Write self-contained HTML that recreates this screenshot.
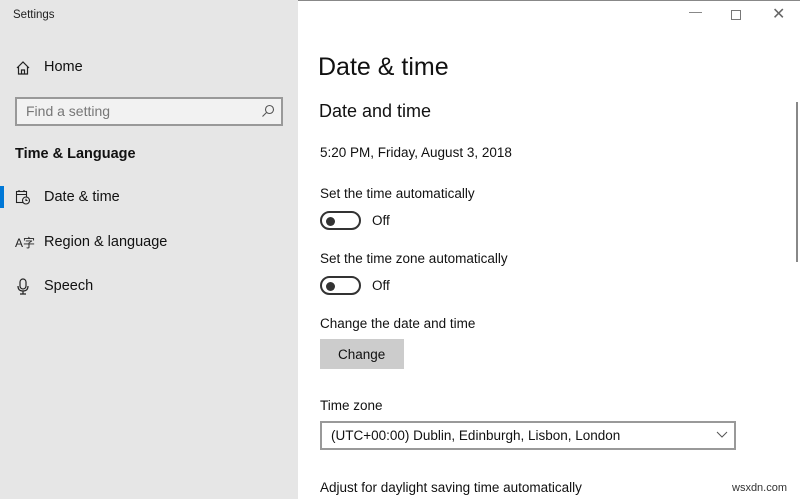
<!DOCTYPE html>
<html><head><style>
*{margin:0;padding:0;box-sizing:border-box}
body{width:800px;height:499px;overflow:hidden;background:#fff;font-family:"Liberation Sans",sans-serif;color:#000;position:relative}
.side{position:absolute;left:0;top:0;width:298px;height:499px;background:#e6e6e6}
.t{position:absolute;white-space:nowrap}
.sd{font-size:14.5px;color:#111}
.mn{font-size:13.5px;color:#111}
.tog{position:absolute;width:41px;height:19px;border:2px solid #333;border-radius:10px}
.tog::after{content:"";position:absolute;left:4px;top:3.5px;width:9px;height:9px;border-radius:50%;background:#333}
</style></head><body>
<div style="position:absolute;left:0;top:0;width:800px;height:1px;background:#888"></div>
<div class="side"></div>
<div class="t" style="left:13px;top:9px;font-size:11.5px;color:#222">Settings</div>
<svg style="position:absolute;left:15px;top:60px" width="16" height="16" viewBox="0 0 16 16" fill="none" stroke="#222" stroke-width="1.2"><path d="M2 8 L8 2 L14 8 M3.5 6.5 V14 H12.5 V6.5 M6.5 14 V10 H9.5 V14"/></svg>
<div class="t sd" style="left:44px;top:59px">Home</div>
<div style="position:absolute;left:15px;top:97px;width:268px;height:29px;border:2px solid #999;background:#f2f2f2"></div>
<div class="t" style="left:26px;top:103px;font-size:14px;color:#777">Find a setting</div>
<svg style="position:absolute;left:261px;top:104px" width="14" height="14" viewBox="0 0 14 14" fill="none" stroke="#555" stroke-width="1.1"><circle cx="8.5" cy="5.5" r="4"/><path d="M5.5 8.5 L1.5 12.5"/></svg>
<div class="t" style="left:15px;top:146px;font-size:14.5px;font-weight:bold;color:#111">Time &amp; Language</div>
<div style="position:absolute;left:0;top:186px;width:4px;height:22px;background:#0078d7"></div>
<svg style="position:absolute;left:15px;top:189px" width="16" height="16" viewBox="0 0 16 16" fill="none" stroke="#222" stroke-width="1.1"><rect x="1.5" y="2.5" width="10" height="11"/><path d="M1.5 5.5 H11.5 M4 1 V3 M9 1 V3"/><circle cx="11" cy="11.5" r="3.5" fill="#e6e6e6"/><path d="M11 9.8 V11.5 H12.5"/></svg>
<div class="t sd" style="left:44px;top:189px">Date &amp; time</div>
<div class="t" style="left:15px;top:234px;font-size:12px;color:#222">A&#x5B57;</div>
<div class="t sd" style="left:44px;top:234px">Region &amp; language</div>
<svg style="position:absolute;left:16px;top:278px" width="14" height="17" viewBox="0 0 14 17" fill="none" stroke="#222" stroke-width="1.2"><rect x="4" y="1" width="6" height="10" rx="3"/><path d="M2 8 Q2 13 7 13 Q12 13 12 8 M7 13 V16 M4 16 H10"/></svg>
<div class="t sd" style="left:44px;top:278px">Speech</div>

<div class="t" style="left:689px;top:4px;font-size:13px;color:#777">&#x2014;</div>
<div style="position:absolute;left:731px;top:10px;width:10px;height:10px;border:1px solid #777"></div>
<div class="t" style="left:772px;top:4px;font-size:16px;color:#666">&#x2715;</div>

<div class="t" style="left:318px;top:53px;font-size:25px;color:#111">Date &amp; time</div>
<div class="t" style="left:319px;top:101px;font-size:18px;color:#111">Date and time</div>
<div class="t mn" style="left:320px;top:145px">5:20 PM, Friday, August 3, 2018</div>
<div class="t mn" style="left:320px;top:186px">Set the time automatically</div>
<div class="tog" style="left:320px;top:211px"></div>
<div class="t mn" style="left:372px;top:213px">Off</div>
<div class="t mn" style="left:320px;top:251px">Set the time zone automatically</div>
<div class="tog" style="left:320px;top:276px"></div>
<div class="t mn" style="left:372px;top:278px">Off</div>
<div class="t mn" style="left:320px;top:316px">Change the date and time</div>
<div style="position:absolute;left:320px;top:339px;width:84px;height:30px;background:#ccc"></div>
<div class="t mn" style="left:338px;top:347px">Change</div>
<div class="t mn" style="left:320px;top:398px">Time zone</div>
<div style="position:absolute;left:320px;top:421px;width:416px;height:29px;border:2px solid #999"></div>
<div class="t mn" style="left:331px;top:428px">(UTC+00:00) Dublin, Edinburgh, Lisbon, London</div>
<svg style="position:absolute;left:716px;top:431px" width="12" height="8" viewBox="0 0 12 8" fill="none" stroke="#555" stroke-width="1"><path d="M1 1 L6 6 L11 1"/></svg>
<div class="t mn" style="left:320px;top:480px">Adjust for daylight saving time automatically</div>
<div class="t" style="left:732px;top:482px;font-size:11px;color:#333">wsxdn.com</div>
<div style="position:absolute;left:796px;top:102px;width:2px;height:160px;background:#888"></div>
</body></html>
